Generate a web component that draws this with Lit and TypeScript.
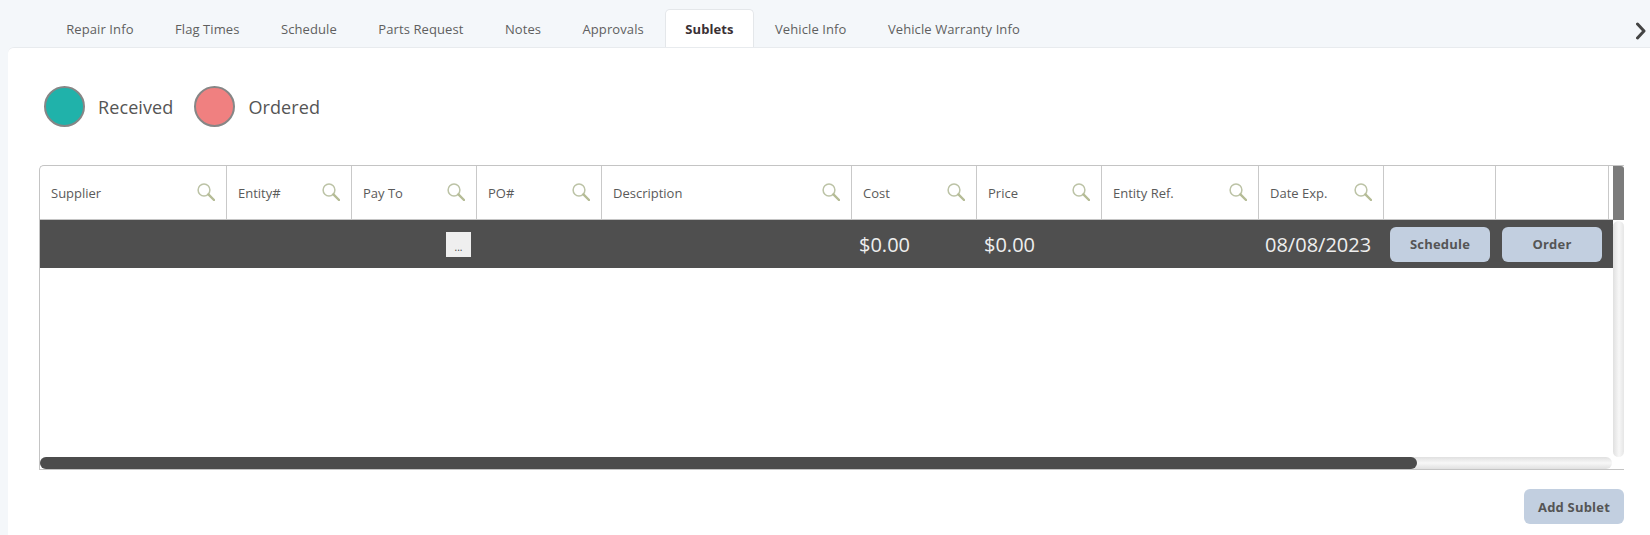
import { LitElement, html, css, svg } from "lit";
import { customElement } from "lit/decorators.js";

const TABS = ["Repair Info", "Flag Times", "Schedule", "Parts Request", "Notes", "Approvals", "Sublets", "Vehicle Info", "Vehicle Warranty Info"];
const COLS = [
  { label: "Supplier", search: true },
  { label: "Entity#", search: true },
  { label: "Pay To", search: true },
  { label: "PO#", search: true },
  { label: "Description", search: true },
  { label: "Cost", search: true },
  { label: "Price", search: true },
  { label: "Entity Ref.", search: true },
  { label: "Date Exp.", search: true },
  { label: "", search: false },
  { label: "", search: false },
];

const searchIcon = svg`<svg class="mag" viewBox="0 0 18 18" width="18" height="18" aria-hidden="true">
  <circle cx="7" cy="7" r="5.9" fill="none" stroke="#bcc3a6" stroke-width="1.5"/>
  <path d="M11.4 11.4 L17 17" stroke="#b5bc96" stroke-width="2.4" stroke-linecap="round"/>
</svg>`;

@customElement("app-root")
export class AppRoot extends LitElement {
  static styles = css`
    :host {
      display: block;
      width: 1650px;
      height: 535px;
      overflow: hidden;
      background: #f4f7fa;
      font-family: "Open Sans", sans-serif;
      color: #555;
    }
    .top {
      height: 47px;
      box-sizing: border-box;
      padding: 9px 4px 0 45.5px;
      display: flex;
      align-items: stretch;
    }
    .tab {
      box-sizing: border-box;
      padding: 0 19.7px;
      border: 1px solid transparent;
      border-bottom: none;
      font-size: 13px;
      letter-spacing: 0.1px;
      line-height: 38px;
      color: #5f5f5f;
      white-space: nowrap;
    }
    .tab.on {
      background: #fff;
      border-color: #e4e7ea;
      border-radius: 5px 5px 0 0;
      font-weight: 700;
      color: #3a3034;
    }
    .chev {
      margin: 13px 0 0 auto;
      flex: none;
    }
    .panel {
      margin-left: 8px;
      height: 488px;
      box-sizing: border-box;
      background: #fff;
      border-top: 1px solid #e8ebee;
      border-top-left-radius: 6px;
      padding: 37px 26px 0 31px;
    }
    .legend {
      display: flex;
      align-items: center;
      height: 43px;
      margin-left: 5px;
      font-size: 18px;
      letter-spacing: 0.1px;
      color: #555;
    }
    .dot {
      box-sizing: border-box;
      width: 41px;
      height: 41px;
      border-radius: 50%;
      border: 2px solid #868686;
      margin-right: 13px;
    }
    .dot.rec { background: #20b2aa; }
    .dot.ord { background: #f08080; margin-left: 21px; }
    .tbl {
      margin-top: 37px;
      width: 1585px;
      height: 305px;
      box-sizing: border-box;
      border: 1px solid #c4c4c4;
      border-right: none;
      border-radius: 5px 0 0 0;
      display: grid;
      grid-template-columns: 1573px 11px;
      grid-template-rows: 54px 1fr 12px;
    }
    .cols {
      display: grid;
      grid-template-columns: 187px 125px 125px 125px 250px 125px 125px 157px 125px 112px 113px;
    }
    .head {
      border-bottom: 1px solid #c4c4c4;
      padding-right: 4px;
    }
    .hc {
      box-sizing: border-box;
      border-right: 1px solid #c9c9c9;
      padding: 0 11px 0 11px;
      display: flex;
      align-items: center;
      justify-content: space-between;
      font-size: 13px;
      color: #5a5a5a;
    }
    .mag { flex: none; margin-top: -1px; }
    .vthumb {
      background: #7b7b7b;
      border-radius: 0 3px 0 0;
    }
    .body { min-height: 0; }
    .row {
      height: 48px;
      background: #4f4f4f;
      color: #eee;
      font-size: 20px;
      align-items: center;
    }
    .c { padding-left: 7px; white-space: nowrap; }
    .c.tight { padding-left: 6px; }
    .c.dots { display: flex; justify-content: flex-end; padding-right: 6px; }
    .more {
      width: 25px;
      height: 25px;
      margin-top: 1px;
      background: #efefef;
      color: #444;
      font-size: 10px;
      line-height: 30px;
      text-align: center;
    }
    .btn {
      box-sizing: border-box;
      width: 100px;
      height: 35px;
      border-radius: 6px;
      background: #c2cfe0;
      color: #555;
      font-size: 13px;
      font-weight: 700;
      letter-spacing: 0.2px;
      display: flex;
      align-items: center;
      justify-content: center;
    }
    .vtrack {
      margin-top: 1px;
      background: linear-gradient(90deg, #e0e0e0, #f7f7f7 55%, #e6e6e6);
      border-radius: 6px;
    }
    .htrack {
      margin-right: 1px;
      background: linear-gradient(180deg, #e0e0e0, #f7f7f7 50%, #e0e0e0);
      border-radius: 6px;
      display: flex;
    }
    .hthumb {
      width: 1377px;
      height: 100%;
      background: #4c4c4c;
      border-radius: 6px;
    }
    .foot {
      display: flex;
      justify-content: flex-end;
      margin-top: 19px;
      width: 1585px;
    }
  `;

  render() {
    return html`
      <div class="top">
        ${TABS.map((t) => html`<div class="tab ${t === "Sublets" ? "on" : ""}">${t}</div>`)}
        <svg class="chev" width="10" height="18" viewBox="0 0 10 18" aria-hidden="true">
          <path d="M1.5 2 L8 9 L1.5 16" fill="none" stroke="#444" stroke-width="3" stroke-linecap="round" stroke-linejoin="round"/>
        </svg>
      </div>
      <div class="panel">
        <div class="legend">
          <span class="dot rec"></span><span>Received</span>
          <span class="dot ord"></span><span>Ordered</span>
        </div>
        <div class="tbl">
          <div class="cols head">
            ${COLS.map((c) => html`<div class="hc"><span>${c.label}</span>${c.search ? searchIcon : ""}</div>`)}
          </div>
          <div class="vthumb"></div>
          <div class="body">
            <div class="cols row">
              <div class="c"></div>
              <div class="c"></div>
              <div class="c dots"><div class="more">...</div></div>
              <div class="c"></div>
              <div class="c"></div>
              <div class="c">$0.00</div>
              <div class="c">$0.00</div>
              <div class="c"></div>
              <div class="c tight">08/08/2023</div>
              <div class="c tight"><div class="btn">Schedule</div></div>
              <div class="c tight"><div class="btn">Order</div></div>
            </div>
          </div>
          <div class="vtrack"></div>
          <div class="htrack"><div class="hthumb"></div></div>
          <div></div>
        </div>
        <div class="foot"><div class="btn">Add Sublet</div></div>
      </div>
    `;
  }
}
